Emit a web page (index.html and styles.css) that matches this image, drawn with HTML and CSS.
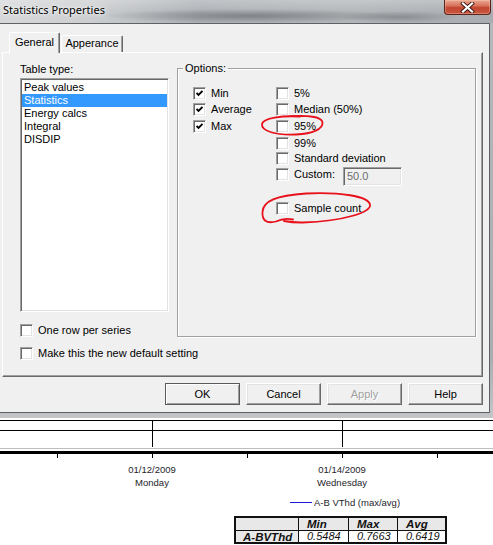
FILE: index.html
```html
<!DOCTYPE html>
<html lang="en">
<head>
<meta charset="utf-8">
<title>Statistics Properties</title>
<link rel="stylesheet" href="styles.css">
</head>
<body>
<div class="window">
  <div class="titlebar">
    <span class="title">Statistics Properties</span>
    <div class="close">
      <svg width="15" height="11" viewBox="0 0 15 11">
        <path d="M3 1.5 L12 9.5 M12 1.5 L3 9.5" stroke="#3a1a14" stroke-width="4" stroke-linecap="square"/>
        <path d="M3 1.5 L12 9.5 M12 1.5 L3 9.5" stroke="#fff" stroke-width="2.2" stroke-linecap="square"/>
      </svg>
    </div>
  </div>
  <div class="client">
    <div class="tabs">
      <div class="tab tab-general active">General</div>
      <div class="tab tab-appearance">Apperance</div>
    </div>
    <div class="page">
      <div class="page-top">
        <div class="left-col">
          <div class="label">Table type:</div>
          <ul class="listbox">
            <li class="item">Peak values</li>
            <li class="item sel">Statistics</li>
            <li class="item">Energy calcs</li>
            <li class="item">Integral</li>
            <li class="item">DISDIP</li>
          </ul>
          <div class="check"><span class="box"></span>One row per series</div>
        </div>
        <div class="group">
          <span class="group-title">Options:</span>
          <div class="col col-a">
            <div class="check"><span class="box"><svg class="tick" width="7" height="7" viewBox="0 0 7 7"><path d="M0.5 3 L2.5 5 L6.5 1" fill="none" stroke="#000" stroke-width="1.9"/></svg></span>Min</div>
            <div class="check"><span class="box"><svg class="tick" width="7" height="7" viewBox="0 0 7 7"><path d="M0.5 3 L2.5 5 L6.5 1" fill="none" stroke="#000" stroke-width="1.9"/></svg></span>Average</div>
            <div class="check"><span class="box"><svg class="tick" width="7" height="7" viewBox="0 0 7 7"><path d="M0.5 3 L2.5 5 L6.5 1" fill="none" stroke="#000" stroke-width="1.9"/></svg></span>Max</div>
          </div>
          <div class="col col-b">
            <div class="check"><span class="box"></span>5%</div>
            <div class="check"><span class="box"></span>Median (50%)</div>
            <div class="check"><span class="box"></span>95%</div>
            <div class="check"><span class="box"></span>99%</div>
            <div class="check"><span class="box"></span>Standard deviation</div>
            <div class="check custom"><span class="box"></span><span class="custom-label">Custom:</span><span class="field">50.0</span></div>
            <div class="check"><span class="box"></span>Sample count</div>
          </div>
        </div>
      </div>
      <div class="check bottom-check"><span class="box"></span>Make this the new default setting</div>
    </div>
    <div class="buttons">
      <div class="btn default">OK</div>
      <div class="btn">Cancel</div>
      <div class="btn disabled">Apply</div>
      <div class="btn">Help</div>
    </div>
  </div>
</div>

<div class="chart">
  <svg class="axis" width="493" height="78" viewBox="0 0 493 78">
    <g stroke="#000" stroke-width="1">
      <line x1="0" y1="2.5" x2="493" y2="2.5"/>
      <line x1="0" y1="12.5" x2="493" y2="12.5"/>
      <line x1="152.5" y1="2" x2="152.5" y2="29"/>
      <line x1="342.5" y1="2" x2="342.5" y2="29"/>
      <line x1="57.5" y1="36" x2="57.5" y2="40"/>
      <line x1="152.5" y1="36" x2="152.5" y2="40"/>
      <line x1="247.5" y1="36" x2="247.5" y2="40"/>
      <line x1="342.5" y1="36" x2="342.5" y2="40"/>
      <line x1="437.5" y1="36" x2="437.5" y2="40"/>
    </g>
    <line x1="0" y1="30.5" x2="493" y2="30.5" stroke="#bdbdbd"/>
    <rect x="0" y="33" width="493" height="3" fill="#000"/>
    <g class="axis-text" text-anchor="middle">
      <text x="152" y="55">01/12/2009</text>
      <text x="152" y="67.5">Monday</text>
      <text x="342" y="55">01/14/2009</text>
      <text x="342" y="67.5">Wednesday</text>
    </g>
  </svg>
  <div class="legend"><span class="swatch"></span>A-B VThd (max/avg)</div>
  <div class="stats">
    <div class="cell head"></div>
    <div class="cell head">Min</div>
    <div class="cell head">Max</div>
    <div class="cell head">Avg</div>
    <div class="cell head">A-BVThd</div>
    <div class="cell val">0.5484</div>
    <div class="cell val">0.7663</div>
    <div class="cell val">0.6419</div>
  </div>
</div>

<svg class="marks" width="493" height="545" viewBox="0 0 493 545">
  <path d="M300 116.5 C282 115.5 263 118 262 124 C261 131 276 135.5 296 134.5 C313 133.5 323 129 322.5 122.5 C322 117 309 114.8 287 116.5"
        fill="none" stroke="#e8101a" stroke-width="1.8" stroke-linecap="round"/>
  <path d="M293 219.5 C286 218 280 219.5 276 221.5 C266 224 262 220 262.5 212 C263 201 276 195.5 306 193.5 C340 192 368 196 370 204.5 C371.5 212 345 221 303 222.5 C296 222.6 289 222 284 221"
        fill="none" stroke="#e8101a" stroke-width="1.8" stroke-linecap="round"/>
</svg>
</body>
</html>
```
FILE: styles.css
```css
html, body {
  margin: 0;
  padding: 0;
}

body {
  width: 493px;
  height: 545px;
  position: relative;
  overflow: hidden;
  background: #fff;
  font-family: "Liberation Sans", Arial, sans-serif;
  font-size: 11px;
  color: #000;
}

/* ---------- window frame ---------- */
.window {
  height: 418px;
  display: flex;
  flex-direction: column;
  background: linear-gradient(to bottom, #b6b9bc, #a9adb0 85%, #c3c5c7);
}

.titlebar {
  height: 23px;
  flex: none;
  display: flex;
  align-items: flex-start;
  background:
    radial-gradient(ellipse 150px 7px at 250px 16px, rgba(70, 72, 76, 0.45), rgba(70, 72, 76, 0)),
    radial-gradient(ellipse 60px 6px at 400px 17px, rgba(70, 72, 76, 0.35), rgba(70, 72, 76, 0)),
    linear-gradient(to bottom, rgba(255, 255, 255, 0.25), rgba(255, 255, 255, 0) 55%),
    linear-gradient(to right, #d6d8da 0, #ccced0 18%, #adb1b5 40%, #b3b6b9 70%, #a9adb1 100%);
}

.title {
  padding-left: 3px;
  line-height: 20px;
  font-family: "Noto Sans", "Open Sans", sans-serif;
  font-size: 11px;
  color: #000;
  text-shadow: 0 0 6px #fff, 0 0 3px #fff;
}

.close {
  margin-left: auto;
  margin-right: 2px;
  width: 47px;
  height: 15px;
  box-sizing: border-box;
  border: 1px solid #5b2318;
  border-top: none;
  border-radius: 0 0 4px 4px;
  background: linear-gradient(to bottom, #e9a993 0, #d9735c 40%, #c2462f 55%, #c9573f 100%);
  box-shadow: inset 0 0 0 1px rgba(255, 210, 195, 0.35);
  display: flex;
  align-items: center;
  justify-content: center;
}

.close svg {
  display: block;
}

.client {
  height: 390px;
  margin-right: 3px;
  box-sizing: border-box;
  background: #f0f0f0;
  border-top: 1px solid #5e6266;
  border-right: 1px solid #5e6266;
  border-bottom: 1px solid #5e6266;
}

/* ---------- tabs ---------- */
.tabs {
  display: flex;
  align-items: flex-end;
  padding: 8px 0 0 9px;
}

.tab {
  height: 17px;
  box-sizing: border-box;
  border: 1px solid;
  border-bottom: none;
  border-color: #fff #696969 transparent #fff;
  border-radius: 2px 2px 0 0;
  box-shadow: inset -1px 0 #a0a0a0;
  background: #f0f0f0;
  line-height: 15px;
  text-align: center;
}

.tab.active {
  height: 21px;
  margin-bottom: -1px;
  padding-top: 2px;
  position: relative;
  z-index: 1;
}

.tab-general {
  width: 51px;
}

.tab-appearance {
  width: 62px;
  margin-left: 1px;
}

.page {
  margin-left: 2px;
  width: 481px;
  height: 325px;
  box-sizing: border-box;
  border: 1px solid;
  border-color: #fff #696969 #696969 #fff;
  box-shadow: inset -1px -1px #a0a0a0;
  padding: 10px 0 0 17px;
}

.page-top {
  display: flex;
  align-items: flex-start;
}

/* ---------- left column ---------- */
.left-col {
  width: 149px;
  display: flex;
  flex-direction: column;
}

.label {
  line-height: 13px;
  margin-bottom: 2px;
}

.listbox {
  list-style: none;
  margin: 0;
  height: 234px;
  box-sizing: border-box;
  background: #fff;
  border: 1px solid;
  border-color: #a0a0a0 #fff #fff #a0a0a0;
  box-shadow: inset 1px 1px #696969, inset -1px -1px #e3e3e3;
  padding: 2px 1px 0 1px;
}

.item {
  line-height: 13px;
  padding-left: 2px;
}

.item.sel {
  background: #3399ff;
  color: #fff;
}

/* ---------- checkboxes ---------- */
.check {
  display: flex;
  align-items: center;
  height: 13px;
  line-height: 13px;
  white-space: nowrap;
}

.box {
  width: 13px;
  height: 13px;
  flex: none;
  box-sizing: border-box;
  margin-right: 5px;
  background: #fff;
  border: 1px solid;
  border-color: #a0a0a0 #fff #fff #a0a0a0;
  box-shadow: inset 1px 1px #696969, inset -1px -1px #e3e3e3;
  display: flex;
  align-items: center;
  justify-content: center;
}

.tick {
  display: block;
}

.left-col .check {
  margin-top: 12px;
}

.bottom-check {
  margin-top: 10px;
}

/* ---------- options group ---------- */
.group {
  position: relative;
  margin-left: 8px;
  margin-top: 5px;
  width: 299px;
  height: 269px;
  box-sizing: border-box;
  border: 1px solid #a0a0a0;
  box-shadow: inset 1px 1px #fff, 1px 1px #fff;
  padding: 18px 0 0 15px;
  display: flex;
  align-items: flex-start;
}

.group-title {
  position: absolute;
  top: -7px;
  left: 5px;
  padding: 0 2px;
  line-height: 13px;
  background: #f0f0f0;
}

.col {
  display: grid;
  align-items: start;
}

.col-a {
  width: 83px;
  grid-template-rows: 16px 17px 13px;
}

.col-b {
  grid-template-rows: 16px 17px 17px 15px 16px 34px 13px;
}

.check.custom {
  align-items: flex-start;
}

.custom-label {
  width: 49px;
}

.field {
  width: 59px;
  height: 19px;
  margin-top: -1px;
  box-sizing: border-box;
  border: 1px solid;
  border-color: #a0a0a0 #fff #fff #a0a0a0;
  box-shadow: inset 1px 1px #696969, inset -1px -1px #e3e3e3;
  background: #f0f0f0;
  color: #6d6d6d;
  padding-left: 3px;
  line-height: 17px;
}

/* ---------- buttons ---------- */
.buttons {
  display: flex;
  justify-content: flex-end;
  gap: 6px;
  margin-top: 6px;
  padding-right: 6px;
}

.btn {
  width: 75px;
  height: 22px;
  box-sizing: border-box;
  border: 1px solid;
  border-color: #fff #696969 #696969 #fff;
  box-shadow: inset -1px -1px #a0a0a0, inset 1px 1px #e3e3e3;
  background: #f0f0f0;
  text-align: center;
  line-height: 20px;
}

.btn.default {
  border-color: #5a5a5a;
  box-shadow: inset 1px 1px #fff, inset -1px -1px #a0a0a0;
}

.btn.disabled {
  color: #a0a0a0;
  text-shadow: 1px 1px #fff;
}

/* ---------- chart ---------- */
.chart {
  background: #fff;
}

.axis {
  display: block;
}

.axis-text {
  font-family: "Liberation Sans", Arial, sans-serif;
  font-size: 9.5px;
  fill: #1e1e2a;
}

.legend {
  display: flex;
  align-items: center;
  height: 12px;
  padding-left: 290px;
  font-size: 9.5px;
  color: #1e1e2a;
}

.swatch {
  width: 22px;
  height: 1px;
  margin-right: 2px;
  background: #1b1bd6;
}

.stats {
  display: grid;
  grid-template-columns: 62px 49px 48px 47px;
  grid-template-rows: 12px 11px;
  gap: 1px;
  width: max-content;
  margin: 8px 0 0 234px;
  border: 2px solid #111;
  background: #111;
}

.cell {
  font-style: italic;
  font-size: 11px;
  line-height: 12px;
  padding-left: 8px;
  background: #fff;
  color: #111;
}

.cell.head {
  background: #e8e8e8;
  font-weight: bold;
  font-size: 11.5px;
}

.cell.head:nth-child(5) {
  padding-left: 7px;
}

.cell.val {
  line-height: 11px;
}

/* ---------- annotations ---------- */
.marks {
  position: absolute;
  left: 0;
  top: 0;
  pointer-events: none;
}
```
